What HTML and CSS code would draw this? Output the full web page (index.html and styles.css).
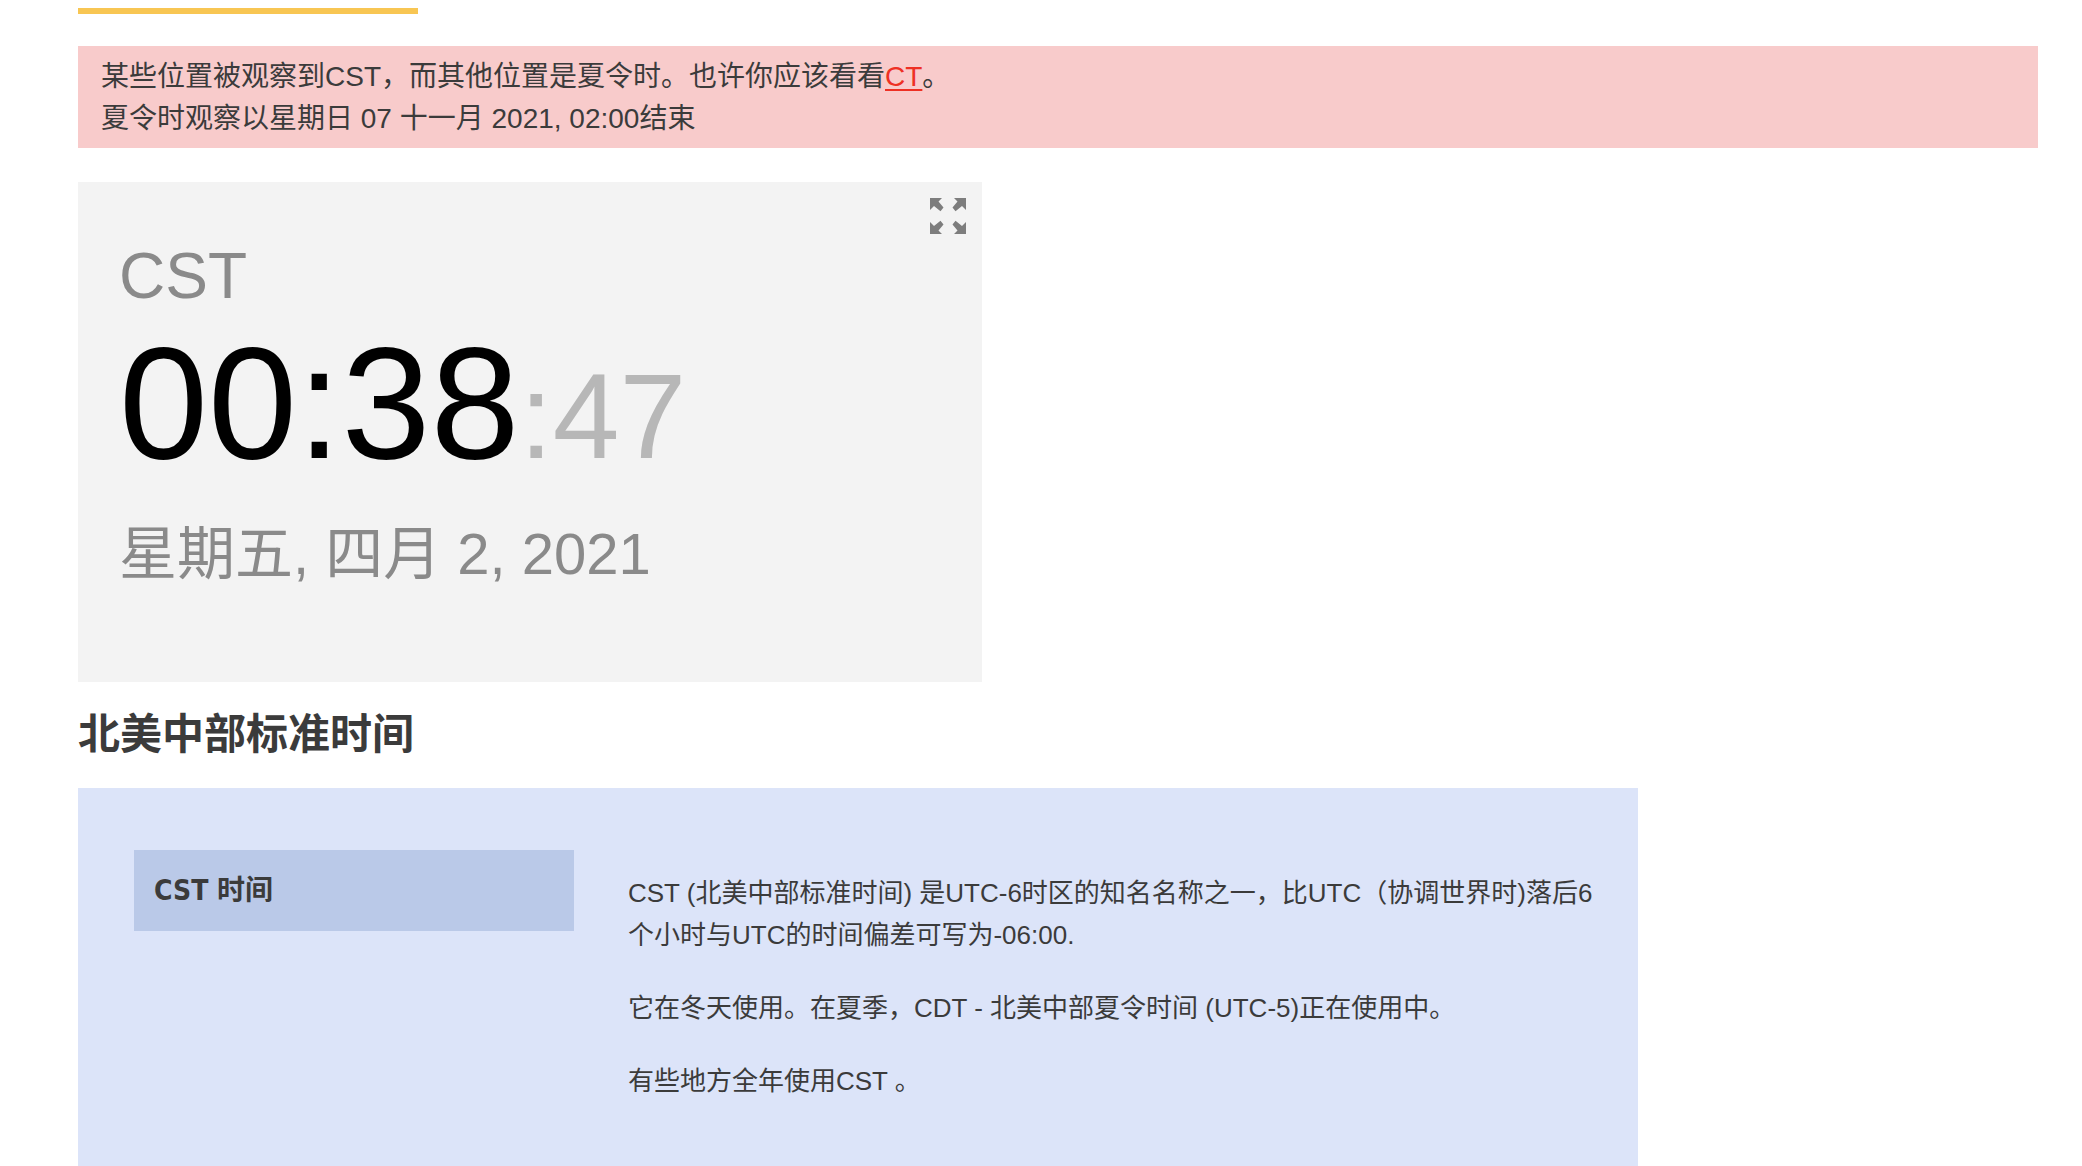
FILE: index.html
```html
<!DOCTYPE html>
<html lang="zh-CN">
<head>
<meta charset="utf-8">
<meta name="viewport" content="width=device-width, initial-scale=1">
<title>CST 时间</title>
<link rel="stylesheet" href="styles.css">
</head>
<body>
<main class="page">
  <div class="accent"></div>

  <div class="notice">
    <p>某些位置被观察到CST，而其他位置是夏令时。也许你应该看看<a href="#ct">CT</a>。</p>
    <p>夏令时观察以星期日 07 十一月 2021, 02:00结束</p>
  </div>

  <section class="clock">
    <div class="clock-face">
      <div class="clock-zone">CST</div>
      <div class="clock-time">00:38<span class="clock-seconds">:47</span></div>
      <div class="clock-date">星期五, 四月 2, 2021</div>
    </div>
    <button class="expand" type="button" aria-label="全屏">
      <svg viewBox="0 0 36 36" width="36" height="36" aria-hidden="true">
        <path d="M0 0H12L8.5 3.5L13.5 9.5L10.5 13.2L4 8L0 12Z"/>
        <path d="M36 0H24L27.5 3.5L22.5 9.5L25.5 13.2L32 8L36 12Z"/>
        <path d="M0 36H12L8.5 32.5L13.5 26.5L10.5 22.8L4 28L0 24Z"/>
        <path d="M36 36H24L27.5 32.5L22.5 26.5L25.5 22.8L32 28L36 24Z"/>
      </svg>
    </button>
  </section>

  <h1 class="title">北美中部标准时间</h1>

  <section class="panel">
    <h2 class="panel-label">CST 时间</h2>
    <div class="panel-text">
      <p>CST (北美中部标准时间) 是UTC-6时区的知名名称之一，比UTC（协调世界时)落后6个小时与UTC的时间偏差可写为-06:00.</p>
      <p>它在冬天使用。在夏季，CDT - 北美中部夏令时间 (UTC-5)正在使用中。</p>
      <p>有些地方全年使用CST 。</p>
    </div>
  </section>
</main>
</body>
</html>
```
FILE: styles.css
```css
* {
  box-sizing: border-box;
}

body {
  margin: 0;
  background: #fff;
  color: #3b3b3b;
  font-family: "Liberation Sans", "Noto Sans CJK SC", sans-serif;
  font-size: 28px;
  line-height: 42px;
}

p,
h1,
h2 {
  margin: 0;
}

.page {
  padding: 8px 44px 0 78px;
}

.accent {
  max-width: 340px;
  height: 6px;
  background: #f8c653;
}

.notice {
  margin-top: 32px;
  padding: 10px 23px 8px;
  background: #f8cbcb;
}

.notice a {
  color: #ee3024;
  text-decoration-thickness: 2px;
  text-underline-offset: 3px;
}

.clock {
  display: flex;
  justify-content: space-between;
  align-items: flex-start;
  max-width: 904px;
  min-height: 500px;
  margin-top: 34px;
  padding: 16px 16px 16px 41px;
  background: #f3f3f3;
}

.clock-face {
  padding-top: 41px;
  color: #8a8a8a;
}

.clock-zone {
  font-size: 64px;
  line-height: 74px;
}

.clock-time {
  color: #000;
  font-size: 160px;
  line-height: 180px;
}

.clock-seconds {
  color: #b7b7b7;
  font-size: 120px;
  line-height: 120px;
}

.clock-date {
  margin-top: 28px;
  font-size: 58px;
  line-height: 66px;
}

.expand {
  display: flex;
  padding: 0;
  border: 0;
  background: none;
  cursor: pointer;
}

.expand svg {
  fill: #7d7d7d;
}

.title {
  padding: 24px 0;
  font-size: 42px;
  line-height: 58px;
}

.panel {
  display: grid;
  grid-template-columns: minmax(0, 440px) minmax(0, 1fr);
  gap: 54px;
  align-items: start;
  max-width: 1560px;
  padding: 62px 40px 64px 56px;
  background: #dce4f9;
}

.panel-label {
  padding: 1px 20px 0;
  background: #bac9e8;
  font-family: "DejaVu Sans Condensed", "Noto Sans CJK SC", sans-serif;
  font-size: 28px;
  line-height: 80px;
}

.panel-text {
  display: grid;
  gap: 31px;
  padding-top: 22px;
  font-size: 26px;
}
```
